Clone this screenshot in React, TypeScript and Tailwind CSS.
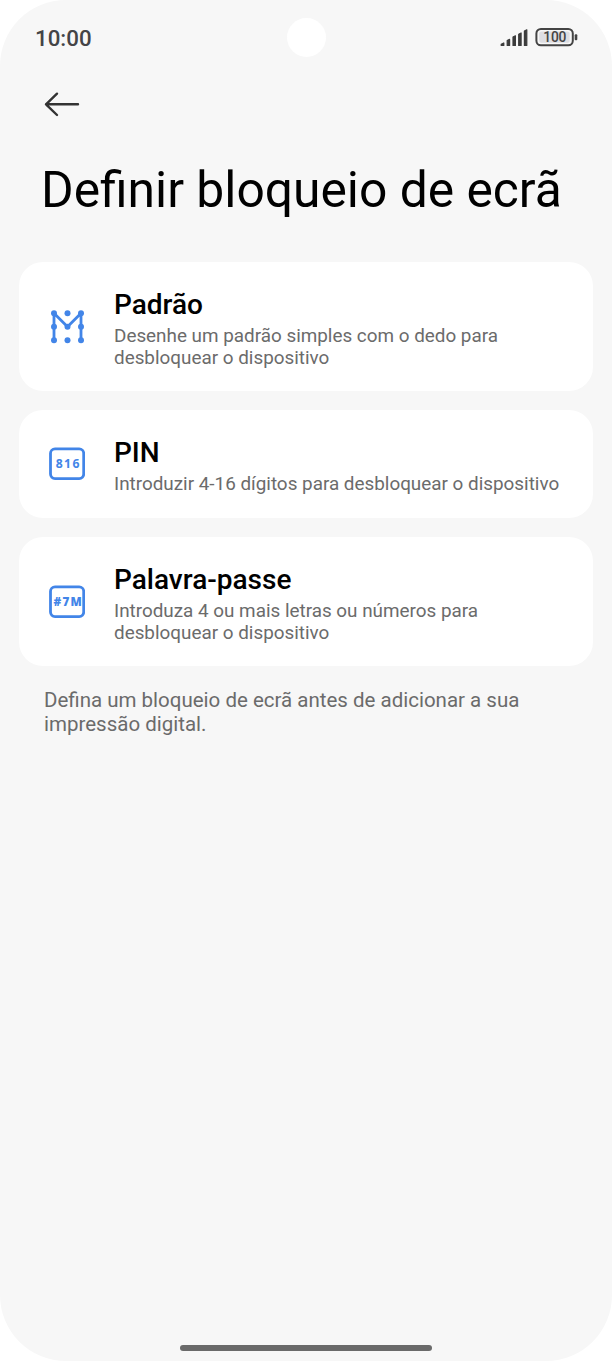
import React from 'react';

interface LockOptionProps {
  title: string;
  lines: string[];
  icon: React.ReactNode;
  className: string;
}

const PatternIcon: React.FC = () => (
  <svg width="36" height="36" viewBox="0 0 36 36" fill="none">
    <path d="M5 31.3V4.3L18.5 17.8L32 4.3V31.3" stroke="#4285e8" strokeWidth="2.8" strokeLinejoin="round" />
    <g fill="#4285e8">
      <circle cx="5" cy="4.3" r="3" />
      <circle cx="18.5" cy="4.3" r="3" />
      <circle cx="32" cy="4.3" r="3" />
      <circle cx="5" cy="17.8" r="3" />
      <circle cx="18.5" cy="17.8" r="3" />
      <circle cx="32" cy="17.8" r="3" />
      <circle cx="5" cy="31.3" r="3" />
      <circle cx="18.5" cy="31.3" r="3" />
      <circle cx="32" cy="31.3" r="3" />
    </g>
  </svg>
);

interface BoxIconProps {
  text: string;
  width: number;
  size: number;
  weight: number;
}

const BoxIcon: React.FC<BoxIconProps> = ({ text, width, size, weight }) => (
  <svg width="36" height="34" viewBox="0 0 36 34" fill="none">
    <rect x="1.5" y="1.8" width="33.2" height="29.8" rx="4.5" stroke="#4285e8" strokeWidth="2.8" />
    <text
      x="18.6"
      y="21.3"
      textAnchor="middle"
      textLength={width}
      fontFamily="'Open Sans', sans-serif"
      fontSize={size}
      fontWeight={weight}
      fill="#4285e8"
    >
      {text}
    </text>
  </svg>
);

const LockOption: React.FC<LockOptionProps> = ({ title, lines, icon, className }) => (
  <button className={`flex w-full items-center rounded-[24px] bg-white pl-[30px] text-left ${className}`}>
    <span className="w-[65px] shrink-0">{icon}</span>
    <span className="block pt-[3px]">
      <span className="block text-[28px] leading-[34px] font-medium text-black">{title}</span>
      <span className="mt-[3px] block text-[18.86px] leading-[22px] text-[#6b6b6b]">
        {lines.map((line) => (
          <span key={line} className="block whitespace-nowrap">{line}</span>
        ))}
      </span>
    </span>
  </button>
);

const StatusBar: React.FC = () => (
  <header className="grid h-[75px] grid-cols-3 items-center">
    <span className="pt-[2px] pl-[35px] text-[22.3px] leading-none font-medium text-[#444446]">10:00</span>
    <span className="mb-px size-[39px] justify-self-center rounded-full bg-white" />
    <div className="flex items-center justify-self-end pr-[33px] pb-px">
      <svg width="28" height="20" viewBox="0 0 28 20" fill="#3c3c3c" stroke="#3c3c3c" strokeWidth="1.2" strokeLinejoin="round">
        <path d="M1.2 18.4V17.4L3.8 16V18.4ZM7.2 18.4V13.6L9.6 12.4V18.4ZM13 18.4V10L15.4 8.8V18.4ZM18.7 18.4V7.2L21.1 6V18.4ZM24.4 18.4V4L26.8 2.8V18.4Z" />
      </svg>
      <svg className="ml-[7px]" width="44" height="20" viewBox="0 0 44 20">
        <rect x="1.4" y="1.9" width="36.4" height="16.4" rx="4.5" fill="#f7f7f7" stroke="#444" strokeWidth="2" />
        <rect x="4.2" y="4.4" width="30.5" height="11.4" rx="2" fill="#dedee2" />
        <rect x="39.7" y="7.2" width="2.6" height="6" rx="1" fill="#444" />
        <text x="19.8" y="15" textAnchor="middle" textLength="23" fontFamily="Roboto, sans-serif" fontSize="13.8" fontWeight="500" fill="#444">100</text>
      </svg>
    </div>
  </header>
);

export default function App() {
  return (
    <div className="bg-white font-['Roboto',sans-serif]">
      <main className="flex h-[1361px] w-[612px] flex-col overflow-hidden rounded-[66px] bg-[#f7f7f7]">
        <StatusBar />
        <button className="ml-[44px] mt-[16px] self-start" aria-label="Voltar">
          <svg width="36" height="26" viewBox="0 0 36 26" fill="none" stroke="#333" strokeWidth="2.4" strokeLinecap="round" strokeLinejoin="round">
            <path d="M34 13.3H2M13 2.7L2 13.3L13 24" />
          </svg>
        </button>
        <h1 className="mt-[43px] ml-[41px] text-[49.75px] leading-[60px] whitespace-nowrap text-black">Definir bloqueio de ecrã</h1>

        <div className="mt-[42px] flex flex-col gap-[19px] px-[19px]">
          <LockOption
            title="Padrão"
            lines={['Desenhe um padrão simples com o dedo para', 'desbloquear o dispositivo']}
            icon={<PatternIcon />}
            className="h-[129px]"
          />
          <LockOption
            title="PIN"
            lines={['Introduzir 4-16 dígitos para desbloquear o dispositivo']}
            icon={<BoxIcon text="816" width={23.5} size={12.2} weight={700} />}
            className="h-[108px]"
          />
          <LockOption
            title="Palavra-passe"
            lines={['Introduza 4 ou mais letras ou números para', 'desbloquear o dispositivo']}
            icon={<BoxIcon text="#7M" width={28} size={11.6} weight={800} />}
            className="h-[129px]"
          />
        </div>

        <p className="mt-[22px] ml-[44px] text-[20.5px] leading-[24px] text-[#6b6b6b]">
          Defina um bloqueio de ecrã antes de adicionar a sua
          <br />
          impressão digital.
        </p>

        <div className="mt-auto mb-[10px] h-[6px] w-[252px] self-center rounded-full bg-[#6a6a6a]" />
      </main>
    </div>
  );
}
